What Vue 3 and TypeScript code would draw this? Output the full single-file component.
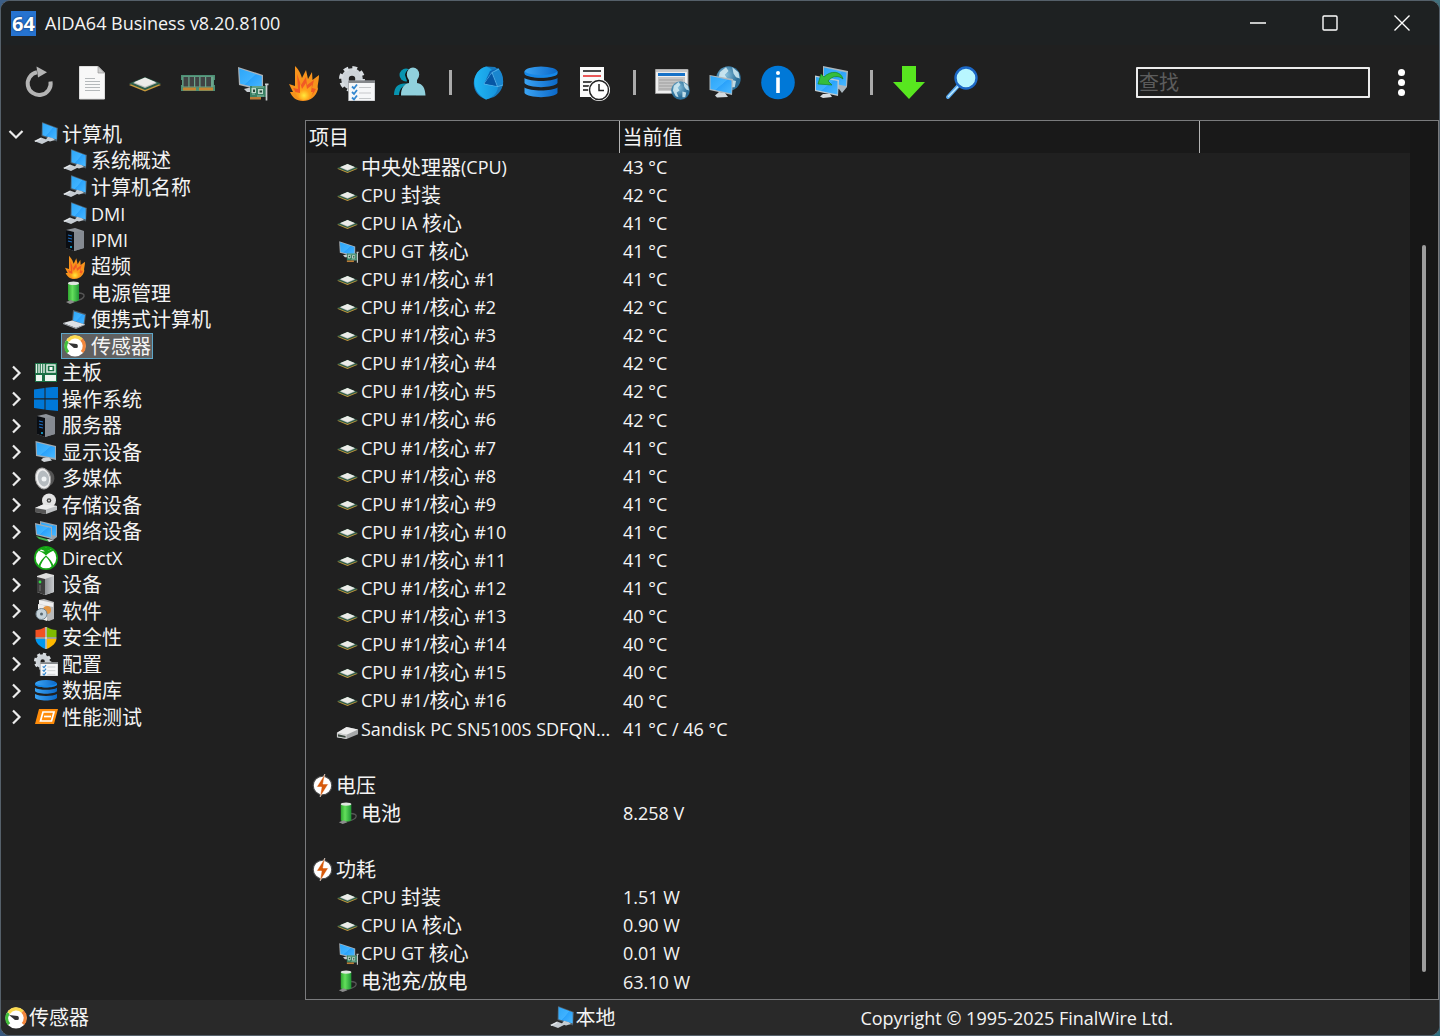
<script setup lang="ts">
import { h, ref } from 'vue'

interface TreeNode { icon: string; label: string; children?: TreeNode[] }
interface Row { icon?: string; label?: string; value?: string; group?: boolean }

/* Han runs are set slightly larger than the Latin text beside them. */
const Txt = (props: { t: string }) =>
  h('span', { class: 'txt' }, props.t.split(/([\u3400-\u9fff]+)/).filter(Boolean).map((part) =>
    /[\u3400-\u9fff]/.test(part) ? h('span', { class: 'han' }, part) : part))
Txt.props = ['t']

const tools: { icon: string; title: string }[] = [
  { icon: 'refresh', title: '刷新' }, { icon: 'doc', title: '报告' }, { icon: 'chip', title: 'CPUID' },
  { icon: 'ram', title: 'SPD' }, { icon: 'gpu', title: 'GPU' }, { icon: 'flame', title: '超频' },
  { icon: 'config', title: '配置' }, { icon: 'users', title: '用户' }, { icon: '', title: '' },
  { icon: 'pie', title: '统计' }, { icon: 'db', title: '数据库' }, { icon: 'log', title: '日志' },
  { icon: '', title: '' }, { icon: 'web', title: '网页' }, { icon: 'netpc', title: '远程' },
  { icon: 'info', title: '信息' }, { icon: 'sync', title: '连接' }, { icon: '', title: '' },
  { icon: 'down', title: '更新' }, { icon: 'lens', title: '搜索' },
]

const tree: TreeNode[] = [
  {
    icon: 'pc', label: '计算机', children: [
      { icon: 'pc', label: '系统概述' }, { icon: 'pc', label: '计算机名称' }, { icon: 'pc', label: 'DMI' },
      { icon: 'server', label: 'IPMI' }, { icon: 'flame', label: '超频' }, { icon: 'battery', label: '电源管理' },
      { icon: 'laptop', label: '便携式计算机' }, { icon: 'gauge', label: '传感器' },
    ],
  },
  { icon: 'board', label: '主板' }, { icon: 'windows', label: '操作系统' }, { icon: 'server', label: '服务器' },
  { icon: 'monitor', label: '显示设备' }, { icon: 'speaker', label: '多媒体' }, { icon: 'disc', label: '存储设备' },
  { icon: 'network', label: '网络设备' }, { icon: 'xbox', label: 'DirectX' }, { icon: 'tower', label: '设备' },
  { icon: 'software', label: '软件' }, { icon: 'shield', label: '安全性' }, { icon: 'config', label: '配置' },
  { icon: 'db', label: '数据库' }, { icon: 'bench', label: '性能测试' },
]
const selected = ref('传感器')

const coreTemps = [41, 42, 42, 42, 42, 42, 41, 41, 41, 41, 41, 41, 40, 40, 40, 40]
const rows: Row[] = [
  { icon: 'chip', label: '中央处理器(CPU)', value: '43 °C' },
  { icon: 'chip', label: 'CPU 封装', value: '42 °C' },
  { icon: 'chip', label: 'CPU IA 核心', value: '41 °C' },
  { icon: 'gpu', label: 'CPU GT 核心', value: '41 °C' },
  ...coreTemps.map((t, i) => ({ icon: 'chip', label: `CPU #1/核心 #${i + 1}`, value: `${t} °C` })),
  { icon: 'drive', label: 'Sandisk PC SN5100S SDFQN...', value: '41 °C / 46 °C' },
  {},
  { icon: 'bolt', label: '电压', group: true },
  { icon: 'battery', label: '电池', value: '8.258 V' },
  {},
  { icon: 'bolt', label: '功耗', group: true },
  { icon: 'chip', label: 'CPU 封装', value: '1.51 W' },
  { icon: 'chip', label: 'CPU IA 核心', value: '0.90 W' },
  { icon: 'gpu', label: 'CPU GT 核心', value: '0.01 W' },
  { icon: 'battery', label: '电池充/放电', value: '63.10 W' },
]
</script>

<template>
  <svg class="sprite" width="0" height="0" aria-hidden="true">
    <defs>
      <linearGradient id="screen" x1="0" y1="0" x2="1" y2="1"><stop offset="0" stop-color="#2da6f7" /><stop offset=".5" stop-color="#3fb2ff" /><stop offset=".52" stop-color="#2aa2fb" /><stop offset="1" stop-color="#4bb9ff" /></linearGradient>
      <linearGradient id="blue" x1="0" x2="1"><stop offset="0" stop-color="#3ba4f4" /><stop offset="1" stop-color="#0b68c8" /></linearGradient>
      <linearGradient id="pieg" x1="0" x2="1"><stop offset="0" stop-color="#20b6f4" /><stop offset="1" stop-color="#1593dc" /></linearGradient>
      <linearGradient id="green" x1="0" x2="1"><stop offset="0" stop-color="#2fa62f" /><stop offset=".4" stop-color="#63df5c" /><stop offset="1" stop-color="#1f9634" /></linearGradient>
      <linearGradient id="metal" x1="0" x2="1"><stop offset="0" stop-color="#8f9296" /><stop offset="1" stop-color="#c8cbce" /></linearGradient>
      <radialGradient id="globe" cx=".4" cy=".35"><stop offset="0" stop-color="#86bfdc" /><stop offset="1" stop-color="#2b6e98" /></radialGradient>
      <radialGradient id="fire" cx=".5" cy=".75" r=".7"><stop offset="0" stop-color="#ffe93c" /><stop offset=".45" stop-color="#ffa31a" /><stop offset="1" stop-color="#f7941e" /></radialGradient>
    </defs>
    <symbol id="i-refresh" viewBox="0 0 36 36">
      <path d="M29.5 16.500A11.500 11.500 0 1 1 16 7.200" fill="none" stroke="#b4b4b4" stroke-width="4" /><path d="M15.500 1.500 26 7.300 17 12.500Z" fill="#b4b4b4" />
    </symbol>
    <symbol id="i-doc" viewBox="0 0 36 36">
      <path d="M5.500 1.500H24L30.500 8V34H5.500Z" fill="#f8f8f8" stroke="#dcdcdc" /><path d="M24 1.500V8H30.500Z" fill="#d0d0d0" stroke="#8c8c8c" stroke-width=".6" />
      <path d="M11 13.500H21M11 16.500H26M11 19.500H26M11 22.500H26M11 25.500H26" stroke="#b5b9bb" stroke-width="1.200" />
    </symbol>
    <symbol id="i-chip" viewBox="0 0 36 36">
      <path d="M2 20 18 13 34 20 18 26.500Z" fill="#c79a3c" /><path d="M2 18.600 18 12 34 18.600 18 25Z" fill="#2c5c48" /><path d="M6 18 18 13 30 18 18 23Z" fill="#bfc2be" /><path d="M7 17.300 18 12.500 29 17.300 18 21.800Z" fill="#ecece9" />
    </symbol>
    <symbol id="i-ram" viewBox="0 0 36 36">
      <path d="M1 10H35V15H34V20H35V26H1V20H2V15H1Z" fill="#4d8f74" /><path d="M2.500 11.500H33.500V22H2.500Z" fill="#6ba58c" />
      <path d="M3.500 12H8.300V21.500H3.500ZM9.500 12H14V21.500H9.500ZM15.200 12H19.200V21.500H15.200ZM20.500 12H25V21.500H20.500ZM26.200 12H31V21.500H26.200Z" fill="#414344" />
      <path d="M3 22.500H16V25.500H3ZM19 22.500H33V25.500H19Z" fill="#c78432" />
    </symbol>
    <symbol id="i-gpu" viewBox="0 0 36 36">
      <g transform="translate(3 0)">
        <path d="M2 2 27 10V26L3 20Z" fill="#aab1b7" /><path d="M3.200 3.500 25.800 11V24L4.200 18.800Z" fill="url(#screen)" /><path d="M8 24 16 22 18 27 11 27Z" fill="#c9ced2" />
        <path d="M14 21H30V32H14Z" fill="#3a8064" /><path d="M15.500 23H20V28H15.500ZM22 24H27V29H22Z" fill="#bdd7c9" /><path d="M17 24.500H19V27H17ZM23.500 25.500H26V27.500H23.500Z" fill="#24473a" /><path d="M16 29H19M21 31H28M16 22H28" stroke="#8fc2aa" /><path d="M14 32H25V34.500H14Z" fill="#bb7d36" /><path d="M30.500 18.500V35.500M29 19.300H32.500" stroke="#c9cdcd" stroke-width="1.700" />
      </g>
    </symbol>
    <symbol id="i-flame" viewBox="0 0 36 36">
      <path d="M9 1C14 6 15 10 16 13L20 5 22 14 26 7 26.500 15 33 10C33 17 31 20 32 24 30 32 24 36 17 36 10 36 6 32 4 27L7 27 3 19 9 21Z" fill="#f7931c" /><path d="M11 9 15 20 20 12 21 20 28 15 26 23 30 24C26 32 21 34 16 34 11 32 10 27 7 23L12 24Z" fill="#f15a24" /><path d="M14 17 16 24 20 18 21 24 26 20 25 27 27 27C25 34 22 35 17 35 11 34 11 30 9 27L14 28Z" fill="url(#fire)" />
    </symbol>
    <symbol id="i-config" viewBox="0 0 36 36">
      <circle cx="13" cy="14" r="7" fill="none" stroke="#cdd3d8" stroke-width="7.500" /><circle cx="13" cy="14" r="11" fill="none" stroke="#d8dde1" stroke-width="4" stroke-dasharray="4.700 3.940" />
      <path d="M9.500 16H36V36H9.500Z" fill="#f6f7f8" stroke="#9da0a3" stroke-width=".8" /><path d="M9.500 15.500H36V18H9.500Z" fill="#85888b" />
      <path d="M13 21.500 15 23.500 18 19.500M13 27 15 29 18 25M13 32.500 15 34.500 18 30.500" fill="none" stroke="#3488d0" stroke-width="1.800" /><path d="M20 22.500H32M20 28H32M20 33.500H32" stroke="#c5c8ca" stroke-width="1.200" />
    </symbol>
    <symbol id="i-users" viewBox="0 0 36 36">
      <circle cx="14" cy="10" r="6.500" fill="#0794b0" /><path d="M2 30C2 21 7 19 12 18.500H20V30Z" fill="#0794b0" /><path d="M7 31C7 23 12 20 16 19L13 10C14 4 20 2 24 3V31Z" fill="#111" />
      <ellipse cx="21" cy="9.500" rx="6.200" ry="7" fill="#90d0dc" /><path d="M17 14H25V18C31 19 33 23 33.500 30.500H9C9 23 12 19 17 18Z" fill="#90d0dc" />
    </symbol>
    <symbol id="i-pie" viewBox="0 0 36 36">
      <path d="M17 1.500 25 2C36 9 36 25 24 32L16 34.500C-1 29 0 6 17 1.500Z" fill="#1779bd" /><path d="M16 1.500C1 6 0 26 16 34.500 25 32 28 26 28 21L15 18 22 5C20 3 18 2 16 1.500Z" fill="url(#pieg)" /><path d="M14 19 20 6 26 4 32 13 33 20 28 21.500Z" fill="#0b64b5" /><path d="M28 3C32 7 33.500 12 33 20L28 21.500 22.500 8Z" fill="#1a86cf" /><path d="M14 19 22 7.500 29 4M22 7.500 27.500 21.500M14 19 28 21.500 33 20" fill="none" stroke="#5fbbed" stroke-width=".8" /><path d="M14.500 18.500 21.500 8.500 26.500 21Z" fill="#0656a4" />
    </symbol>
    <symbol id="i-db" viewBox="0 0 36 36">
      <ellipse cx="18" cy="7" rx="16.500" ry="5.500" fill="url(#blue)" /><path d="M1.500 6V9C5 14 31 14 34.500 9V6C31 11.500 5 11.500 1.500 6Z" fill="#1688e8" /><path d="M1.500 13C7 17 29 17 34.500 13V18C31 23.500 5 23.500 1.500 18ZM1.500 22.500C7 26.500 29 26.500 34.500 22.500V28C31 33.500 5 33.500 1.500 28Z" fill="url(#blue)" />
    </symbol>
    <symbol id="i-log" viewBox="0 0 36 36">
      <path d="M4 2H28V32H4Z" fill="#fafafa" /><path d="M7 6H25M7 17H19M7 21H15M7 25H14" stroke="#111" stroke-width="1.500" /><path d="M7 11H25" stroke="#e42020" stroke-width="1.600" />
      <circle cx="23" cy="25" r="11" fill="#fff" /><circle cx="23" cy="25" r="9.500" fill="#fff" stroke="#222" stroke-width="1.500" /><path d="M23 19V25.500H28" fill="none" stroke="#222" stroke-width="1.500" />
    </symbol>
    <symbol id="i-ball" viewBox="0 0 20 20">
      <circle cx="10" cy="10" r="9.800" fill="url(#globe)" /><path d="M3 5 8 1 10 4 7 7 9 10 6 12 8 17 5 16 2 10ZM13 1 18 5 19 10 16 9 14 6ZM12 11 16 12 15 17 12 17Z" fill="#d6edf4" opacity=".85" />
    </symbol>
    <symbol id="i-web" viewBox="0 0 36 36">
      <path d="M1.500 4.500H34V28.500H1.500Z" fill="#efefef" stroke="#9a9a9a" /><path d="M2 4.500H33.500V7H2Z" fill="#c7c7c7" /><path d="M4 8H31V11H4Z" fill="#1672c8" /><path d="M4 12H31V26H4Z" fill="#c6c6c6" /><path d="M5 15H29M5 18H29M5 21H29M5 24H23" stroke="#9d9d9d" /><use href="#i-ball" x="17" y="16" width="19" height="19" />
    </symbol>
    <symbol id="i-netpc" viewBox="0 0 36 36">
      <use href="#i-ball" x="9" y="1" width="25" height="25" /><path d="M2.500 10 26 14 25 30 2.500 25Z" fill="#aeb9c0" /><path d="M3.500 11 24.500 15.500V28.500L3.500 24Z" fill="url(#screen)" /><path d="M12 27 18 28 21 32 10 32.500 8 30.500Z" fill="#d4dade" />
    </symbol>
    <symbol id="i-info" viewBox="0 0 36 36">
      <circle cx="18" cy="17.500" r="16.800" fill="#0078d7" /><circle cx="18" cy="8" r="2" fill="#fff" /><path d="M18 12.500V28" stroke="#fff" stroke-width="3.600" />
    </symbol>
    <symbol id="i-sync" viewBox="0 0 36 36">
      <path d="M10 1 35 6 34 22 29 28 26 24 10 20Z" fill="#aab6be" /><path d="M11 2.500 33.500 7.500 33 21 11 17Z" fill="url(#screen)" /><path d="M2 10.500 26 15 25 31 2 26Z" fill="#c1cbd1" /><path d="M3 12 24.500 16V29.500L3 25Z" fill="url(#screen)" /><path d="M10 29 17 29 19 32 10 33 7 31.500Z" fill="#d6dce0" /><path d="M5 19 8 9 11 12C18 5 28 6 30 14 25 10 19 11 15 16L19 20Z" fill="#35bd3c" stroke="#168622" stroke-width=".7" />
    </symbol>
    <symbol id="i-down" viewBox="0 0 36 36"><path d="M11 1H25V17H34L18 34 2 17H11Z" fill="#58e61f" /></symbol>
    <symbol id="i-lens" viewBox="0 0 36 36"><path d="M14 21 4 32" stroke="#5aa9ee" stroke-width="4" stroke-linecap="round" /><path d="M14.500 21 4 32" stroke="#c4efff" stroke-width="1.200" /><circle cx="22" cy="13" r="10.500" fill="#b8f6ff" stroke="#1c68c6" stroke-width="2.400" /></symbol>

    <symbol id="i-pc" viewBox="0 0 24 24">
      <path d="M8 0 24 6 23 19.500 7.500 14Z" fill="#4e5b66" /><path d="M8.500 1 22.700 6.300V17.500L8.500 13.300Z" fill="url(#screen)" /><path d="M14 14.800 19 16.300 21 18 16 19.500 11.500 18Z" fill="#c5ccd2" /><path d="M0 19 7 15.500 15 18.500 8 22Z" fill="#c6ccd2" /><path d="M1 19.500 7 16.500" stroke="#eef1f3" />
    </symbol>
    <symbol id="i-server" viewBox="0 0 24 24">
      <path d="M3 2 12 0 21 3V20L11 23 3 20Z" fill="#8d9299" /><path d="M3 2 11 4V23L3 20Z" fill="#0a0d12" /><path d="M11 4 21 3V20L11 23Z" fill="#858a91" /><path d="M5 7 9 8M5 10 9 11M5 13 9 14" stroke="#1d6dc0" stroke-width="1.200" /><circle cx="8" cy="19" r="1" fill="#1bb4e8" />
    </symbol>
    <symbol id="i-tower" viewBox="0 0 24 24">
      <path d="M3 3 12 0 20 2V19L11 22 3 19Z" fill="#dedede" /><path d="M3 4 11 6V22L3 19Z" fill="#3d3d3d" /><path d="M11 6 20 3V19L11 22Z" fill="url(#metal)" /><circle cx="6" cy="9" r="1.400" fill="#2fe046" /><path d="M6 12V18" stroke="#777" />
    </symbol>
    <symbol id="i-battery" viewBox="0 0 24 24">
      <path d="M15 12C24 12 23 18 12 20" fill="none" stroke="#555" stroke-width="1.400" /><path d="M5 2H16V19C14 21 7 21 5 19Z" fill="url(#green)" /><ellipse cx="10.500" cy="2.200" rx="5.500" ry="1.800" fill="#dfe6df" /><path d="M3 21 8 19 12 21 7 23Z" fill="#8c8c8c" />
    </symbol>
    <symbol id="i-laptop" viewBox="0 0 24 24">
      <path d="M10 2 23 6 21.500 17 9 13Z" fill="#505d68" /><path d="M11 3.500 22 7 20.500 16 10 12.500Z" fill="url(#screen)" /><path d="M0 15 9 12.500 22 16.500 13 20Z" fill="#dfe3e7" /><path d="M0 15V16L13 21 22 17V16L13 20Z" fill="#a1a7ad" />
    </symbol>
    <symbol id="i-gauge" viewBox="0 0 24 24">
      <circle cx="12" cy="12" r="10.500" fill="#fff" /><path d="M5 18.300A9 9 0 0 1 4.500 7" fill="none" stroke="#43bf3b" stroke-width="3.200" /><path d="M4.800 7A8.800 8.800 0 0 1 18.500 5.500" fill="none" stroke="#fbd94e" stroke-width="3.200" /><path d="M18.500 5.500A9 9 0 0 1 19 18" fill="none" stroke="#f4873c" stroke-width="3.200" /><path d="M5 9 13.500 10 14.500 13.500 11 14Z" fill="#333" /><circle cx="13" cy="12" r="1.900" fill="#333" />
    </symbol>
    <symbol id="i-board" viewBox="0 0 24 24">
      <path d="M1 2H23V21H1Z" fill="#1b7045" /><path d="M2.500 3V12M5 3V12M7.500 3V12M10 3V12" stroke="#e5f0e8" stroke-width="1.400" /><path d="M13 4H21V11H13Z" fill="none" stroke="#e5f0e8" stroke-width="1.500" /><path d="M15.500 6H18.500V9H15.500Z" fill="#fff" /><path d="M2 14H8V20H2ZM11 14H22V20H11Z" fill="#eef6f0" />
    </symbol>
    <symbol id="i-windows" viewBox="0 0 24 24"><path d="M0 2.500 10.500 1V11.300H0ZM11.500.8 24-.5V11.300H11.500ZM0 12.500H10.500V22.500L0 21ZM11.500 12.500H24V24L11.500 22.700Z" fill="#0078d7" /></symbol>
    <symbol id="i-monitor" viewBox="0 0 24 24">
      <path d="M1.500 1 22 6V20L2 16Z" fill="#9fabb4" /><path d="M2.500 2.500 21 7V18L3 14.800Z" fill="url(#screen)" /><path d="M9 18 15 17.500 18 20.500 10 22 7 20Z" fill="#d0d5d9" />
    </symbol>
    <symbol id="i-speaker" viewBox="0 0 24 24">
      <path d="M8 1 17 4C22 8 21 15 17 18L10 22Z" fill="#545454" /><ellipse cx="9" cy="11.500" rx="7.500" ry="10.500" transform="rotate(-12 9 11.500)" fill="#eee" stroke="#a4a4a4" /><ellipse cx="9.500" cy="11.500" rx="5.500" ry="8" transform="rotate(-12 9.500 11.500)" fill="#b6bcc0" /><circle cx="10" cy="12" r="2.500" fill="#f2f5f6" />
    </symbol>
    <symbol id="i-disc" viewBox="0 0 24 24">
      <circle cx="15" cy="7.500" r="7" fill="#e4e4e4" /><circle cx="15" cy="7.500" r="2.300" fill="#444" /><circle cx="15" cy="7.500" r="1" fill="#ddd" /><path d="M1 15 10 11 23 13V17L12 21 1 19Z" fill="#bfc2c4" /><path d="M1 15 10 11 23 13 12 16.500Z" fill="#ededed" /><path d="M1 15 12 17V21L1 19Z" fill="#555" />
    </symbol>
    <symbol id="i-drive" viewBox="0 0 24 24">
      <path d="M1 15.500 11 9.500 23 12V17L11 22 1 20Z" fill="#a6a8a9" /><path d="M1 15.500 11 9.500 23 12 11 17.500Z" fill="#ececec" /><path d="M1 15.500 11 17.500V22L1 20Z" fill="#d4d4d4" /><path d="M2 17 10 18.700V20.700L2 19.200Z" fill="#37433b" />
    </symbol>
    <symbol id="i-network" viewBox="0 0 24 24">
      <path d="M6 1 23 5V17L19 20 6 14Z" fill="#99a4ac" /><path d="M7 2.500 22 6V16L7 12Z" fill="url(#screen)" /><path d="M1 3 18 7V19L2 15Z" fill="#a3adb4" /><path d="M2 4.500 17 8V17.500L3 14Z" fill="url(#screen)" /><path d="M2 16 16 20 16 22 5 19Z" fill="#47b653" /><path d="M13 19 20 20 15 22Z" fill="#d7dcdf" />
    </symbol>
    <symbol id="i-xbox" viewBox="0 0 24 24">
      <circle cx="12" cy="12" r="12" fill="#14a614" /><circle cx="12" cy="12" r="10.300" fill="#fff" /><path d="M5.500 3.500C9 3.500 11 5.500 12 6.200 13 5.500 15 3.500 18.500 3.500L17 1.500H7Z" fill="#14a614" /><path d="M4 4.500C8 5.500 17 12 20 20.500L18 21.500C17 17 14 13 12 11 10 13 7 17 6 21.500L4 20.500C7 12 16 5.500 20 4.500L19 3.300C16 3.500 8 8 5 3.300Z" fill="#14a614" />
    </symbol>
    <symbol id="i-software" viewBox="0 0 24 24">
      <path d="M5 1 10 0 20 3V20L15 22 5 19Z" fill="#b9babb" /><path d="M4 5 13 7V22L4 19Z" fill="#ececec" /><path d="M5 1 19 4V8L5 5Z" fill="#efefef" /><circle cx="13" cy="11" r="4" fill="#e39542" /><circle cx="7.500" cy="15" r="5.500" fill="#c5d2da" stroke="#74858f" /><circle cx="7.500" cy="15" r="1.500" fill="#586770" />
    </symbol>
    <symbol id="i-shield" viewBox="0 0 24 24">
      <path d="M11.300 1V11.300H1.500V4C5 4 8 3 11.300 1Z" fill="#f25022" /><path d="M12.700 1V11.300H22.500V4C19 4 16 3 12.700 1Z" fill="#7fba00" /><path d="M1.500 12.700H11.300V23C5 20 2 17 1.500 12.700Z" fill="#0097ef" /><path d="M22.500 12.700H12.700V23C19 20 22 17 22.500 12.700Z" fill="#ffb900" /><path d="M12 1V23M1.500 12H22.500" stroke="#fff" stroke-width="1.200" />
    </symbol>
    <symbol id="i-bench" viewBox="0 0 24 24">
      <path d="M5 4H24L20 19H1Z" fill="#ff8c0a" /><path d="M9 7H20L17.500 16H6.500Z" fill="none" stroke="#fff" stroke-width="1.700" /><path d="M10 11.500H17" stroke="#fff" stroke-width="1.700" />
    </symbol>
    <symbol id="i-bolt" viewBox="0 0 24 24">
      <circle cx="12" cy="12" r="9.700" fill="#fff" stroke="#494949" stroke-width="1.200" /><path d="M14.500 0 6 13.500H11L9.500 24 18 10.500H12.500Z" fill="#d75a0c" stroke="#fff" stroke-width=".5" />
    </symbol>
  </svg>

  <div class="window">
    <header class="titlebar">
      <span class="logo">64</span>
      <h1 class="title">AIDA64 Business v8.20.8100</h1>
      <button class="win" aria-label="最小化"><svg viewBox="0 0 16 16"><path d="M0 8H16" /></svg></button>
      <button class="win" aria-label="最大化"><svg viewBox="0 0 16 16"><rect x="1" y="1" width="14" height="14" rx="1" /></svg></button>
      <button class="win" aria-label="关闭"><svg viewBox="0 0 16 16"><path d="M.5.5 15.500 15.500M15.500.5.5 15.500" /></svg></button>
    </header>

    <nav class="toolbar">
      <template v-for="(t, i) in tools" :key="i">
        <button v-if="t.icon" class="tool" :aria-label="t.title"><svg><use :href="'#i-' + t.icon" /></svg></button>
        <span v-else class="sep"></span>
      </template>
      <input class="search" type="text" placeholder="查找" aria-label="查找" />
      <button class="more" aria-label="菜单"><i></i><i></i><i></i></button>
    </nav>

    <main class="content">
      <ul class="tree">
        <template v-for="n in tree" :key="n.label">
          <li class="node">
            <svg class="chev" viewBox="0 0 16 16"><path :d="n.children ? 'M1.500 5 8 11.500 14.500 5' : 'M5 1.500 11.500 8 5 14.500'" /></svg>
            <button class="item"><svg class="ico"><use :href="'#i-' + n.icon" /></svg><Txt :t="n.label" /></button>
          </li>
          <li v-for="c in n.children" :key="n.label + c.label" class="node child">
            <button class="item" :class="{ selected: c.label === selected }" @click="selected = c.label">
              <svg class="ico"><use :href="'#i-' + c.icon" /></svg><Txt :t="c.label" />
            </button>
          </li>
        </template>
      </ul>

      <section class="panel">
        <table class="grid">
          <colgroup><col class="c1" /><col class="c2" /><col /></colgroup>
          <thead>
            <tr><th scope="col"><Txt t="项目" /></th><th scope="col"><Txt t="当前值" /></th><th></th></tr>
          </thead>
          <tbody>
            <tr v-for="(r, i) in rows" :key="i">
              <td>
                <div v-if="r.label" class="cell" :class="{ group: r.group }">
                  <svg class="ico"><use :href="'#i-' + r.icon" /></svg><Txt :t="r.label" />
                </div>
              </td>
              <td>{{ r.value }}</td>
              <td></td>
            </tr>
          </tbody>
        </table>
        <div class="scroll"><div class="thumb"></div></div>
      </section>
    </main>

    <footer class="status">
      <div class="s1"><svg class="ico"><use href="#i-gauge" /></svg><Txt t="传感器" /></div>
      <div class="s2"><svg class="ico"><use href="#i-pc" /></svg><Txt t="本地" /></div>
      <div class="s3">Copyright © 1995-2025 FinalWire Ltd.</div>
    </footer>
  </div>
</template>

<style>
body {
  background: linear-gradient(100deg, #3c5f88 0%, #2c4361 40%, #6e7478 60%, #2f6f80 100%);
}
.txt {
  white-space: nowrap;
}
.han {
  font-size: 20px;
  vertical-align: -1px;
}
</style>

<style scoped>
.sprite {
  position: absolute;
}
.window {
  box-sizing: border-box;
  display: flex;
  flex-direction: column;
  min-height: 100vh;
  border: 1px solid #55606a;
  border-radius: 10px;
  background: #202020;
  color: #f4f4f4;
  font: 18px/26px "Open Sans", "Noto Sans CJK SC", sans-serif;
  overflow: hidden;
}
button {
  padding: 0;
  border: 0;
  background: none;
  color: inherit;
  font: inherit;
}
.titlebar {
  display: flex;
  align-items: center;
  height: 44px;
  padding: 0 1px 0 10px;
  background: #1e2122;
}
.logo {
  width: 25px;
  height: 25px;
  margin-right: 9px;
  background: #2673d0;
  color: #fff;
  font: bold 20px/25px "Open Sans", sans-serif;
  text-align: center;
  text-shadow: 0 0 2px #05244d;
}
.title {
  flex: 1;
  margin: 0;
  font-size: 18px;
  font-weight: 400;
}
.win {
  display: flex;
  align-items: center;
  justify-content: center;
  width: 72px;
  height: 44px;
}
.win svg {
  width: 16px;
  height: 16px;
  fill: none;
  stroke: #fff;
  stroke-width: 1.400;
}
.toolbar {
  display: flex;
  align-items: center;
  height: 75px;
  padding: 0 26px 0 11px;
}
.tool {
  display: flex;
  justify-content: center;
  width: 53px;
}
.tool svg {
  width: 36px;
  height: 36px;
}
.sep {
  width: 3px;
  height: 25px;
  margin: 0 9px 0 13px;
  background: #aaa;
}
.search {
  box-sizing: border-box;
  width: 234px;
  height: 31px;
  margin-left: auto;
  padding: 0 1px;
  border: 2px solid #ececec;
  border-radius: 1px;
  background: #1e1e1e;
  color: #f4f4f4;
  font: 20px "Open Sans", "Noto Sans CJK SC", sans-serif;
}
.search::placeholder {
  color: #5c5c5c;
  opacity: 1;
}
.more {
  display: flex;
  flex-direction: column;
  align-items: center;
  gap: 3px;
  width: 24px;
  margin-left: 19px;
}
.more i {
  width: 7px;
  height: 7px;
  border-radius: 50%;
  background: #fff;
}
.content {
  display: flex;
  flex: 1;
}
.tree {
  flex: none;
  width: 304px;
  margin: 0;
  padding: 1px 0 0;
  box-sizing: border-box;
  list-style: none;
}
.node {
  display: flex;
  align-items: center;
  height: 26px;
  padding-left: 7px;
}
.node:nth-child(even) {
  height: 27px;
}
.child {
  padding-left: 60px;
}
.chev {
  width: 16px;
  height: 16px;
  margin-right: 8px;
  fill: none;
  stroke: #ececec;
  stroke-width: 2.200;
}
.item {
  box-sizing: border-box;
  display: flex;
  align-items: center;
  gap: 4px;
  height: 26px;
  padding: 0 1px;
  border: 1px solid transparent;
  line-height: 24px;
}
.selected {
  border-color: #5ea6c8;
  background: #606060;
}
.ico {
  flex: none;
  width: 24px;
  height: 24px;
}
.panel {
  display: flex;
  flex: 1;
  border: 1px solid #7a7b7d;
}
.grid {
  flex: 1;
  align-self: flex-start;
  border-collapse: collapse;
  table-layout: fixed;
}
.c1 {
  width: 313px;
}
.c2 {
  width: 580px;
}
th {
  height: 32px;
  padding: 0 3px;
  background: #191919;
  border-right: 1px solid #b4b4b4;
  font-weight: 400;
  text-align: left;
}
th:last-child {
  border-right: 0;
}
td {
  height: 28px;
  padding: 0 4px;
  line-height: 28px;
  white-space: nowrap;
}
tr:nth-child(10n) td {
  height: 29px;
}
.cell {
  display: flex;
  align-items: center;
  gap: 2px;
  height: 28px;
  padding-left: 26px;
}
.cell .ico {
  width: 23px;
  height: 23px;
}
.group {
  padding-left: 1px;
}
.scroll {
  width: 28px;
  background: #171717;
}
.thumb {
  width: 4px;
  height: calc(83% - 2px);
  margin: 124px auto 0;
  border-radius: 2px;
  background: #9c9c9c;
}
.status {
  display: flex;
  align-items: center;
  height: 35px;
  background: #292929;
}
.status > div {
  display: flex;
  align-items: center;
  gap: 1px;
}
.s1 {
  width: 38%;
  padding-left: 3px;
}
.s2 {
  width: 310px;
}
</style>
